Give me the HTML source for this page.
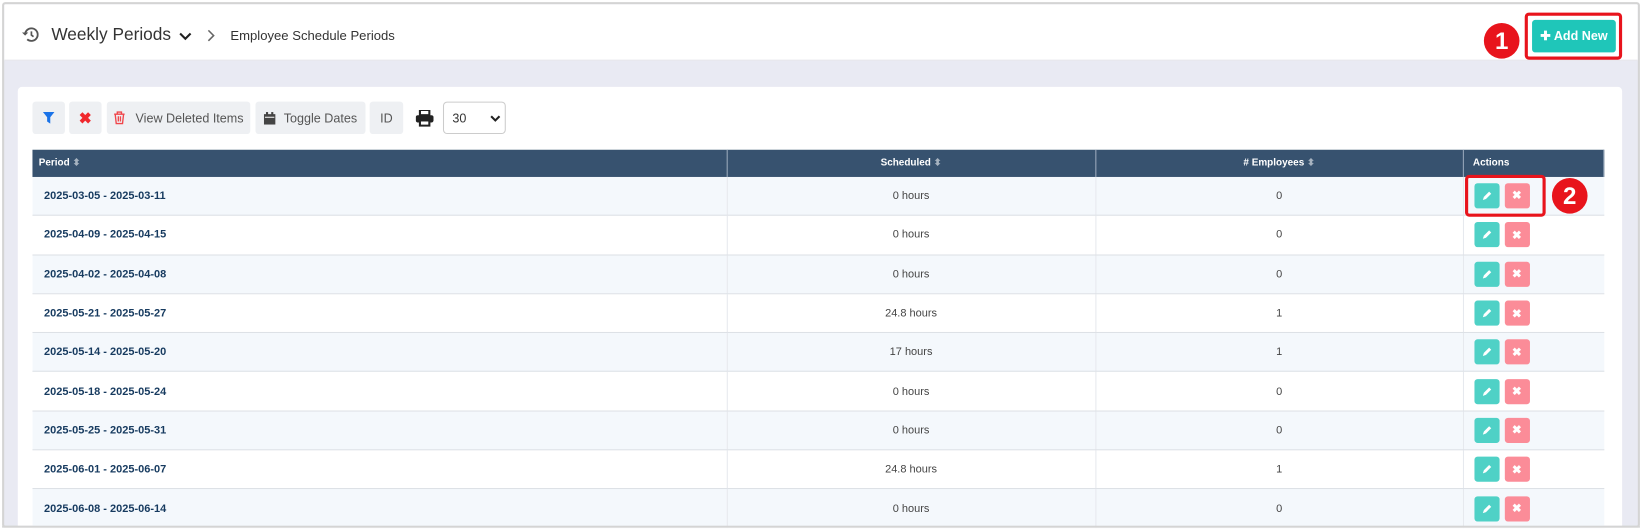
<!DOCTYPE html>
<html><head><style>
*{margin:0;padding:0;box-sizing:border-box}
html,body{width:1642px;height:529px;overflow:hidden}
body{background:#fff;font-family:"Liberation Sans",sans-serif;position:relative}
#w{position:absolute;left:0;top:0;width:1568px;height:505px;transform:scale(1.0472);transform-origin:0 0;overflow:hidden;background:#fff}
.a{position:absolute}
.frame{left:2px;top:2px;width:1564px;height:502px;border:2px solid #d4d4d4;border-radius:3px;background:#e9eaf3;overflow:hidden}
.hdr{left:0;top:0;width:1560px;height:54px;background:#fff;border-bottom:1px solid #e3e3ea}
.card{left:13px;top:79px;width:1532px;height:460px;background:#fff;border-radius:4px}
.tb{top:97px;height:31px;background:#eef0f3;border-radius:3px;font-size:12px;color:#555;display:flex;align-items:center;justify-content:center}
table{position:absolute;left:31px;top:143px;width:1501px;border-collapse:collapse;font-size:10.5px;table-layout:fixed}
th{background:#37526f;color:#fff;font-weight:bold;height:25.5px;text-align:center;border-right:1px solid #8fa0b4;font-size:9.5px}
th:first-child{text-align:left;padding-left:6px}
td{height:37.3px;border-bottom:1px solid #dde1e6;text-align:center;color:#444}
td:first-child{text-align:left;padding-left:11px;color:#163a5f;font-weight:bold}
td:nth-child(1),td:nth-child(2),td:nth-child(3){border-right:1px solid #e6e9ee}
tr:nth-child(even) td{background:#f4f8fc}
.s{color:#a7b3c0;font-size:9px}
.e,.d{display:inline-flex;align-items:center;justify-content:center;width:24px;height:24px;border-radius:3px;vertical-align:middle;color:#fff;font-size:11px}
.e{background:#4fd1c6}.d{background:#fb8c98;margin-left:5px;font-weight:bold}
td:last-child{text-align:left;padding-left:10px}
.circ{width:34px;height:34px;border-radius:50%;background:#e8141c;color:#fff;font-weight:bold;font-size:23px;text-align:center;line-height:34px}
</style></head><body>
<div id="w">
<div class="a frame">
 <div class="a hdr">
  <svg class="a" style="left:17px;top:22px" width="16" height="14" viewBox="0 0 16 14"><path d="M3 7a6 6 0 1 1 2 4.5" fill="none" stroke="#555" stroke-width="1.8"/><path d="M0 5l3 3 3-3z" fill="#555"/><path d="M9 4v3.5l2 1.5" fill="none" stroke="#555" stroke-width="1.6"/></svg>
  <div class="a" style="left:45px;top:20px;font-size:16.5px;color:#333">Weekly Periods</div>
  <svg class="a" style="left:167px;top:27px" width="12" height="8"><path d="M1 1l5 5 5-5" fill="none" stroke="#222" stroke-width="2"/></svg>
  <svg class="a" style="left:194px;top:24px" width="8" height="12"><path d="M1 1l5 5-5 5" fill="none" stroke="#666" stroke-width="1.5"/></svg>
  <div class="a" style="left:216px;top:23px;font-size:12.5px;color:#333">Employee Schedule Periods</div>
  <div class="a circ" style="left:1413px;top:18px">1</div>
  <div class="a" style="left:1452px;top:8px;width:93px;height:45px;border:3px solid #e8141c;border-radius:4px"></div>
  <div class="a" style="left:1459px;top:15px;width:80px;height:31px;background:#1fc6b9;border-radius:3px;color:#fff;font-size:12px;font-weight:bold;line-height:31px;text-align:center">✚ Add New</div>
 </div>
 <div class="a card"></div>
</div>
<div class="a tb" style="left:31px;width:31px"><svg width="11" height="11"><path d="M0 0h11L7 5v6L4 9V5z" fill="#1a73e8"/></svg></div>
<div class="a tb" style="left:66px;width:31px;color:#f0282d;font-weight:bold;font-size:15px">✖</div>
<div class="a tb" style="left:102px;width:137px"><svg width="12" height="13" style="margin-right:9px"><path d="M1 3h10M4 3V1h4v2M2 3l1 9h6l1-9M5 5v5M7 5v5" fill="none" stroke="#f0464b" stroke-width="1.3"/></svg>View Deleted Items</div>
<div class="a tb" style="left:244px;width:105px"><svg width="11" height="12" style="margin-right:8px"><rect x="0" y="2" width="11" height="10" fill="#444"/><rect x="2" y="0" width="2" height="3" fill="#444"/><rect x="7" y="0" width="2" height="3" fill="#444"/><path d="M1 5h9" stroke="#fff"/></svg>Toggle Dates</div>
<div class="a tb" style="left:353px;width:32px">ID</div>
<svg class="a" style="left:397px;top:105px" width="17" height="16"><rect x="4" y="0" width="9" height="5" fill="none" stroke="#222" stroke-width="2"/><rect x="0" y="5" width="17" height="7" rx="2" fill="#222"/><rect x="4" y="10" width="9" height="5" fill="#fff" stroke="#222" stroke-width="2"/></svg>
<div class="a" style="left:423px;top:97px;width:60px;height:31px;border:1px solid #ccc;border-radius:4px;font-size:12px;padding:8px 0 0 8px;color:#333;background:#fff">30<svg class="a" style="left:44px;top:12px" width="10" height="7"><path d="M1 1l4 4 4-4" fill="none" stroke="#222" stroke-width="2"/></svg></div>
<table>
<colgroup><col style="width:663px"><col style="width:352px"><col style="width:351px"><col></colgroup>
<tr><th>Period <span class="s">⬍</span></th><th>Scheduled <span class="s">⬍</span></th><th># Employees <span class="s">⬍</span></th><th style="text-align:left;padding-left:9px">Actions</th></tr>
<tr><td>2025-03-05 - 2025-03-11</td><td>0 hours</td><td>0</td><td><span class="e"><svg width="10" height="10"><path d="M1 9l1-3 5-5 2 2-5 5z" fill="#fff"/></svg></span><span class="d">✖</span></td></tr>
<tr><td>2025-04-09 - 2025-04-15</td><td>0 hours</td><td>0</td><td><span class="e"><svg width="10" height="10"><path d="M1 9l1-3 5-5 2 2-5 5z" fill="#fff"/></svg></span><span class="d">✖</span></td></tr>
<tr><td>2025-04-02 - 2025-04-08</td><td>0 hours</td><td>0</td><td><span class="e"><svg width="10" height="10"><path d="M1 9l1-3 5-5 2 2-5 5z" fill="#fff"/></svg></span><span class="d">✖</span></td></tr>
<tr><td>2025-05-21 - 2025-05-27</td><td>24.8 hours</td><td>1</td><td><span class="e"><svg width="10" height="10"><path d="M1 9l1-3 5-5 2 2-5 5z" fill="#fff"/></svg></span><span class="d">✖</span></td></tr>
<tr><td>2025-05-14 - 2025-05-20</td><td>17 hours</td><td>1</td><td><span class="e"><svg width="10" height="10"><path d="M1 9l1-3 5-5 2 2-5 5z" fill="#fff"/></svg></span><span class="d">✖</span></td></tr>
<tr><td>2025-05-18 - 2025-05-24</td><td>0 hours</td><td>0</td><td><span class="e"><svg width="10" height="10"><path d="M1 9l1-3 5-5 2 2-5 5z" fill="#fff"/></svg></span><span class="d">✖</span></td></tr>
<tr><td>2025-05-25 - 2025-05-31</td><td>0 hours</td><td>0</td><td><span class="e"><svg width="10" height="10"><path d="M1 9l1-3 5-5 2 2-5 5z" fill="#fff"/></svg></span><span class="d">✖</span></td></tr>
<tr><td>2025-06-01 - 2025-06-07</td><td>24.8 hours</td><td>1</td><td><span class="e"><svg width="10" height="10"><path d="M1 9l1-3 5-5 2 2-5 5z" fill="#fff"/></svg></span><span class="d">✖</span></td></tr>
<tr><td>2025-06-08 - 2025-06-14</td><td>0 hours</td><td>0</td><td><span class="e"><svg width="10" height="10"><path d="M1 9l1-3 5-5 2 2-5 5z" fill="#fff"/></svg></span><span class="d">✖</span></td></tr>
</table>
<div class="a" style="left:1399px;top:167px;width:77px;height:40px;border:3px solid #e8141c;border-radius:4px"></div>
<div class="a circ" style="left:1482px;top:170px">2</div>
<div class="a" style="left:2px;top:502px;width:1564px;height:2px;background:#d4d4d4"></div>
<div class="a" style="left:0;top:504px;width:1568px;height:4px;background:#fff"></div>
</div>
</body></html>
